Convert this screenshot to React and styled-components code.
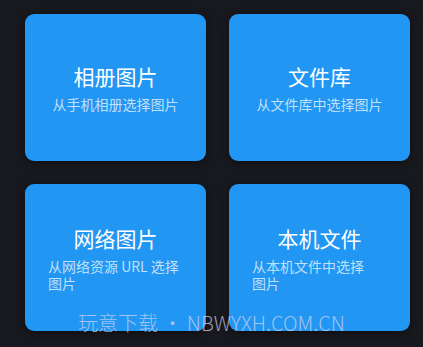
import React from "react";
import styled, { createGlobalStyle } from "styled-components";

const Global = createGlobalStyle`
  html, body {
    margin: 0;
    padding: 0;
    background: #18191e;
  }
  body {
    font-family: "Noto Sans CJK SC", "Noto Sans", sans-serif;
  }
`;

const Page = styled.div`
  position: relative;
  width: 423px;
  height: 347px;
  box-sizing: border-box;
  padding: 14px 13px 16px 25px;
  background: #18191e;
  overflow: hidden;
`;

const Grid = styled.div`
  display: grid;
  grid-template-columns: 1fr 1fr;
  grid-auto-rows: 147px;
  gap: 23px;
`;

const Card = styled.div`
  display: flex;
  flex-direction: column;
  align-items: center;
  justify-content: center;
  box-sizing: border-box;
  padding: 0 23px;
  background: #2196f3;
  border-radius: 9px;
  box-shadow: 0 2px 8px rgba(0, 0, 0, 0.45);
`;

const Title = styled.div`
  font-size: 21px;
  line-height: 28px;
  color: #ffffff;
`;

const Subtitle = styled.div`
  margin-top: 6px;
  font-size: 14px;
  line-height: 17px;
  color: rgba(255, 255, 255, 0.72);
  word-break: keep-all;
  text-align: left;
`;

const Watermark = styled.div`
  position: absolute;
  left: 0;
  right: 0;
  top: 310px;
  text-align: center;
  font-size: 20px;
  line-height: 26px;
  font-weight: 300;
  color: rgba(215, 215, 240, 0.72);
  pointer-events: none;
  white-space: nowrap;
`;

const items = [
  { title: "相册图片", sub: "从手机相册选择图片" },
  { title: "文件库", sub: "从文件库中选择图片" },
  { title: "网络图片", sub: "从网络资源 URL 选择\u200B图片" },
  { title: "本机文件", sub: "从本机文件中选择\u200B图片" },
];

export default function App() {
  return (
    <>
      <Global />
      <Page>
        <Grid>
          {items.map((it) => (
            <Card key={it.title}>
              <Title>{it.title}</Title>
              <Subtitle>{it.sub}</Subtitle>
            </Card>
          ))}
        </Grid>
        <Watermark>玩意下载 • NBWYXH.COM.CN</Watermark>
      </Page>
    </>
  );
}
